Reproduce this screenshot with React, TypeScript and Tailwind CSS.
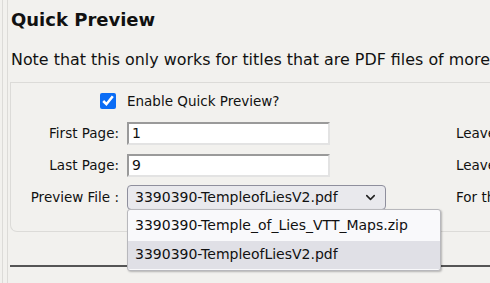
import { ChevronDown } from "lucide-react";

const font = { fontFamily: '"DejaVu Sans", Verdana, sans-serif' };

const Field = ({ label, value, note }: { label: string; value: string; note: string }) => (
  <div className="flex items-center h-[32px] whitespace-nowrap">
    <div className="w-[108px] shrink-0 text-right">{label}</div>
    <div className="w-[337px] shrink-0 pl-[8px]">
      <input
        readOnly
        value={value}
        className="w-[203px] h-[23px] bg-white border-2 border-t-[#9a9a9a] border-l-[#9a9a9a] border-b-[#e3e3e3] border-r-[#e3e3e3] px-[3px] outline-none text-[14px]"
      />
    </div>
    <div className="shrink-0">{note}</div>
  </div>
);

export default function App() {
  return (
    <div
      className="w-[490px] h-[283px] overflow-hidden bg-[#f2f1ee] text-[#111] text-[13.5px]"
      style={font}>
      <div className="ml-[2px] h-full border-l border-[#dcdbd8]">
        <div className="ml-[4px] h-full border-l border-[#dcdbd8] pl-[2px]">
          <h2 className="text-[18px] font-bold pt-[9px] pl-[1px] leading-[22px]">Quick Preview</h2>
          <p className="pt-[19px] pl-[1px] text-[15.9px] leading-[19px] whitespace-nowrap">
            Note that this only works for titles that are PDF files of more than one page.
          </p>
          <div className="mt-[13px] border border-[#dcdbd8] border-r-0 rounded-bl-[7px] h-[150px] pt-[2px] relative">
            <div className="flex items-center h-[32px] whitespace-nowrap">
              <div className="w-[108px] shrink-0 flex justify-end pr-[3px]">
                <input type="checkbox" defaultChecked className="w-[16px] h-[16px] accent-[#0a6cf5]" />
              </div>
              <div className="pl-[8px]">Enable Quick Preview?</div>
            </div>
            <Field label="First Page:" value="1" note="Leave blank to start at page 1" />
            <Field label="Last Page:" value="9" note="Leave blank to end at last page" />
            <div className="flex items-center h-[32px] whitespace-nowrap">
              <div className="w-[108px] shrink-0 text-right">Preview File :</div>
              <div className="w-[337px] shrink-0 pl-[8px] relative">
                <div className="w-[259px] h-[25px] rounded-[4px] border border-[#8f8f9d] bg-[#e9e9ed] flex items-center justify-between pl-[7px] pr-[7px]">
                  <span className="text-[14px]">3390390-TempleofLiesV2.pdf</span>
                  <ChevronDown size={15} strokeWidth={2.5} className="text-[#222]" />
                </div>
                <div className="absolute left-[8px] top-[24px] w-[314px] bg-[#f9f9fb] border border-[#b8b8bc] rounded-[3px] shadow-[1px_1px_2px_rgba(0,0,0,0.25)] py-[1px] z-10 text-[14px]">
                  <div className="h-[30px] flex items-center pl-[7px]">3390390-Temple_of_Lies_VTT_Maps.zip</div>
                  <div className="h-[28px] flex items-center pl-[7px] bg-[#e0e0e6]">3390390-TempleofLiesV2.pdf</div>
                </div>
              </div>
              <div className="shrink-0">For the preview file</div>
            </div>
          </div>
          <div className="mt-[33px] h-[2px] bg-[#555]" />
        </div>
      </div>
    </div>
  );
}
